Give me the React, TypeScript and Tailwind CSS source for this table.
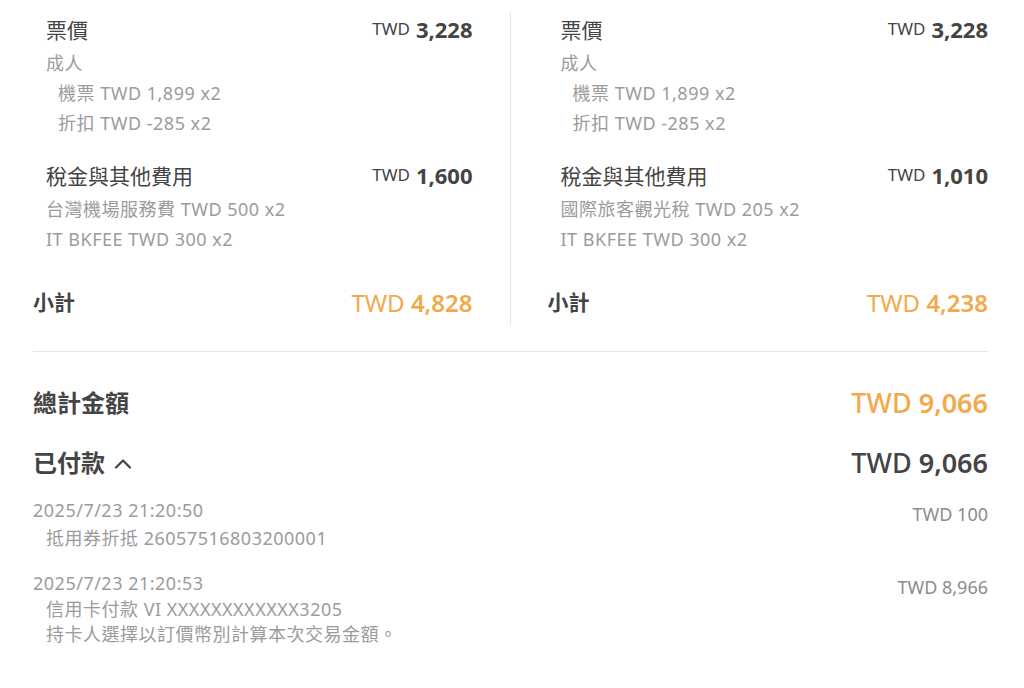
import React from "react"

const FONT = { fontFamily: '"Noto Sans", "Noto Sans CJK TC", sans-serif' }

type Fare = {
  taxLines: string[]
  taxTotal: string
  subtotal: string
}

const fares: Fare[] = [
  {
    taxLines: ["台灣機場服務費 TWD 500 x2", "IT BKFEE TWD 300 x2"],
    taxTotal: "1,600",
    subtotal: "4,828",
  },
  {
    taxLines: ["國際旅客觀光稅 TWD 205 x2", "IT BKFEE TWD 300 x2"],
    taxTotal: "1,010",
    subtotal: "4,238",
  },
]

function Amount({ value }: { value: string }) {
  return (
    <div className="flex items-start gap-[6px] text-[#444]">
      <span className="text-[17px] leading-[33px]">TWD</span>
      <span className="text-[22px] font-bold leading-[34px]">{value}</span>
    </div>
  )
}

function FareColumn({ fare, left }: { fare: Fare; left: boolean }) {
  return (
    <div className={left ? "pr-[37px] pb-[4px] border-r border-[#e3e3e3]" : "pl-[37px] pb-[4px]"}>
      <div className="pl-[13px]">
        <div className="flex justify-between h-[36px]">
          <span className="text-[21px] leading-[36px] text-[#444]">票價</span>
          <Amount value="3,228" />
        </div>
        <div className="text-[18px] leading-[30px] tracking-[0.5px] text-[#9b9b9b]">
          <div>成人</div>
          <div className="pl-[12px]">機票 TWD 1,899 x2</div>
          <div className="pl-[12px]">折扣 TWD -285 x2</div>
        </div>
        <div className="flex justify-between h-[36px] mt-[20px]">
          <span className="text-[21px] leading-[36px] text-[#444]">稅金與其他費用</span>
          <Amount value={fare.taxTotal} />
        </div>
        <div className="text-[18px] leading-[30px] tracking-[0.5px] text-[#9b9b9b]">
          {fare.taxLines.map((l) => (
            <div key={l}>{l}</div>
          ))}
        </div>
      </div>
      <div className="flex justify-between items-center mt-[31px] h-[36px]">
        <span className="text-[21px] font-bold text-[#444]">小計</span>
        <span className="text-[#f2a94b] text-[24px]">
          TWD <span className="font-semibold">{fare.subtotal}</span>
        </span>
      </div>
    </div>
  )
}

export default function App() {
  return (
    <div className="w-[1024px] h-[688px] bg-white overflow-hidden pl-[33px] pr-[36px] pt-[12px]" style={FONT}>
      <div className="grid grid-cols-2">
        <FareColumn fare={fares[0]} left />
        <FareColumn fare={fares[1]} left={false} />
      </div>

      <div className="mt-[26px] border-t border-[#e5e5e5]" />

      <div className="flex justify-between items-center mt-[33px] h-[36px]">
        <span className="text-[24px] font-bold text-[#444]">總計金額</span>
        <span className="text-[27px] font-medium text-[#f2a94b]">
          TWD <span className="font-semibold">9,066</span>
        </span>
      </div>

      <div className="flex justify-between items-center mt-[24px] h-[36px]">
        <span className="flex items-center gap-[9px] text-[24px] font-bold text-[#444]">
          已付款
          <svg width="18" height="11" viewBox="0 0 18 11" fill="none">
            <path d="M2 9.5 9 2.5l7 7" stroke="#444" strokeWidth="2.2" strokeLinecap="round" strokeLinejoin="round" />
          </svg>
        </span>
        <span className="text-[27px] font-medium text-[#444]">
          TWD <span className="font-semibold">9,066</span>
        </span>
      </div>

      <div className="mt-[15px] flex justify-between text-[#9b9b9b]">
        <div className="text-[18px] leading-[28px] tracking-[0.5px]">
          <div>2025/7/23 21:20:50</div>
          <div className="pl-[13px]">抵用券折抵 26057516803200001</div>
        </div>
        <div className="text-[18px] leading-[28px] pt-[4px] text-[#8c8c8c]">TWD 100</div>
      </div>

      <div className="mt-[17px] flex justify-between text-[#9b9b9b]">
        <div className="text-[18px] tracking-[0.5px]">
          <div className="leading-[28px]">2025/7/23 21:20:53</div>
          <div className="pl-[13px] leading-[25px]">
            <div>信用卡付款 VI XXXXXXXXXXXX3205</div>
            <div>持卡人選擇以訂價幣別計算本次交易金額。</div>
          </div>
        </div>
        <div className="text-[18px] leading-[28px] pt-[4px] text-[#8c8c8c]">TWD 8,966</div>
      </div>
    </div>
  )
}
